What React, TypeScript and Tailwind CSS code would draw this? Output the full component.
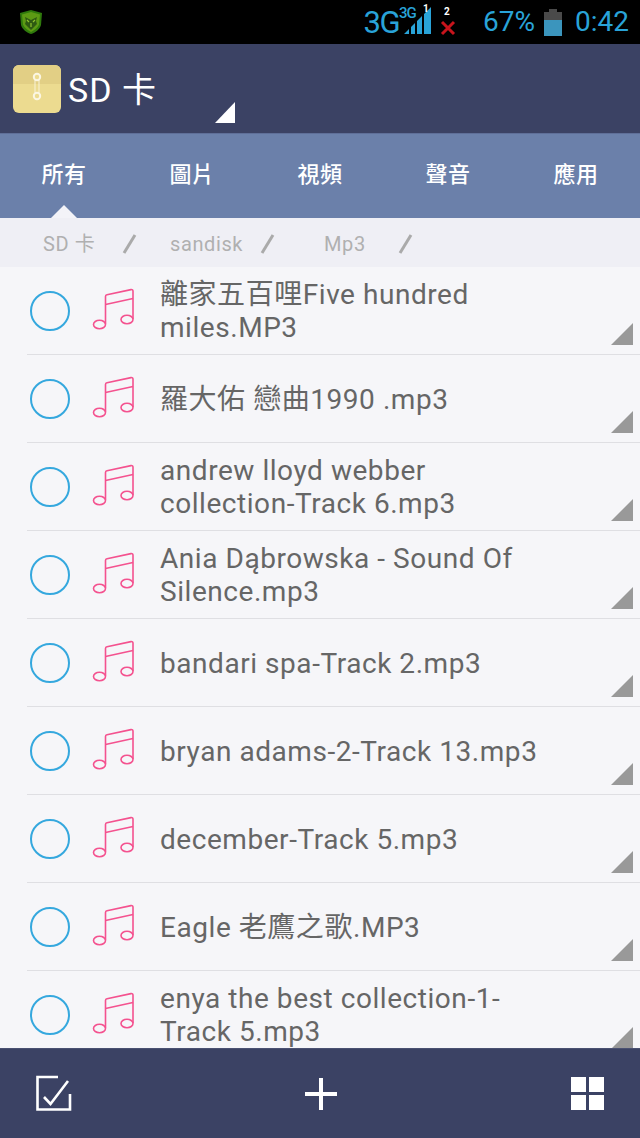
const files = [
  ["離家五百哩Five hundred", "miles.MP3"],
  ["羅大佑 戀曲1990 .mp3"],
  ["andrew lloyd webber", "collection-Track 6.mp3"],
  ["Ania Dąbrowska - Sound Of", "Silence.mp3"],
  ["bandari spa-Track 2.mp3"],
  ["bryan adams-2-Track 13.mp3"],
  ["december-Track 5.mp3"],
  ["Eagle 老鷹之歌.MP3"],
  ["enya the best collection-1-", "Track 5.mp3"],
];

const tabs = ["所有", "圖片", "視頻", "聲音", "應用"];

const fontStack = "font-['Roboto','Noto_Sans_CJK_TC',sans-serif]";

function ZipIcon() {
  return (
    <svg width="48" height="48" viewBox="0 0 48 48" className="shrink-0">
      <rect width="48" height="48" rx="6" fill="#ecdb90" />
      <path d="M0 19V6a6 6 0 0 1 6-6h36a6 6 0 0 1 6 6v13z" fill="#e2cf85" />
      <path d="M22 15v15M26 15v15" stroke="#f8f2d8" strokeWidth="1" />
      <circle cx="24" cy="12" r="3.2" fill="#ecdb90" stroke="#fbf6e2" strokeWidth="2" />
      <circle cx="24" cy="31" r="3.2" fill="#ecdb90" stroke="#fbf6e2" strokeWidth="2" />
    </svg>
  );
}

function Shield() {
  return (
    <svg width="26" height="26" viewBox="0 0 26 26">
      <path d="M13 1l11 3-1 12c-1 4-6 8-10 9-4-1-9-5-10-9L2 4z" fill="#2f7a0c" />
      <path d="M13 3l9 2.500-1 10c-1 3-5 6-8 7.500-3-1.500-7-4.500-8-7.500L4 5.500z" fill="#5c9a14" />
      <path d="M7 8l6 3 6-3-1 4 1 3-6 6-6-6 1-3z" fill="#2e5a12" />
      <path d="M9 11l2 2M17 11l-2 2M13 14v4" stroke="#8fc22e" strokeWidth="1.200" />
    </svg>
  );
}

function Signal() {
  return (
    <svg width="28" height="27" viewBox="0 0 28 27">
      <path d="M0 27l5-5v5zM7 27v-7l4-4v11zM13 27V14l5-5v18zM20 27V7l7-7v27z" fill="#29a3d8" />
    </svg>
  );
}

function NoteIcon() {
  return (
    <svg width="44" height="46" viewBox="0 0 44 46" fill="none" stroke="#f4528f" strokeWidth="1.6" className="shrink-0">
      <ellipse cx="7.500" cy="37.500" rx="6" ry="4.200" />
      <ellipse cx="35" cy="32.500" rx="6" ry="4.200" />
      <path d="M13.500 37V9.500c0-1 .5-1.600 1.500-1.800L39 2.600c1.200-.2 2 .4 2 1.600V32" />
      <path d="M13.500 17.500L41 11.500" />
    </svg>
  );
}

function Corner({ color, w, h }: { color: string; w: number; h: number }) {
  return (
    <svg width={w} height={h} viewBox={`0 0 ${w} ${h}`}>
      <path d={`M0 ${h}L${w} 0V${h}z`} fill={color} />
    </svg>
  );
}

function Slash() {
  return (
    <svg width="15" height="20" viewBox="0 0 15 20" className="shrink-0">
      <path d="M13 1L2 19" stroke="#aaaaaa" strokeWidth="3" />
    </svg>
  );
}

function Row({ lines }: { lines: string[] }) {
  return (
    <div className="relative h-[88px] shrink-0 pl-[27px]">
      <div className="flex h-full items-center border-b border-[#dfdfe3] pb-[1px]">
        <div className="mt-[1px] ml-[3px] h-[40px] w-[40px] shrink-0 rounded-full border-2 border-[#35a8de]" />
        <div className="ml-[22px]">
          <NoteIcon />
        </div>
        <div className="mt-[2px] ml-[24px] text-[28px] leading-[33px] tracking-[0.55px] text-[#666666]">
          {lines.map((l) => (
            <div key={l} className="whitespace-nowrap">
              {l}
            </div>
          ))}
        </div>
      </div>
      <div className="absolute right-[7px] bottom-[10px] flex">
        <Corner color="#999999" w={22} h={22} />
      </div>
    </div>
  );
}

export default function App() {
  return (
    <div className={`flex h-[1138px] w-[640px] flex-col overflow-hidden bg-[#f6f6f9] ${fontStack}`}>
      {/* status bar */}
      <div className="flex h-[44px] shrink-0 items-center bg-black pr-[11px] pl-[18px]">
        <Shield />
        <div className="ml-auto flex items-center text-[#29a3d8]">
          <span className="text-[31px] leading-none tracking-[-1.5px]">3G</span>
          <div className="relative ml-[4px] h-[36px] w-[34px]">
            <div className="absolute top-[3px] left-[1px] flex">
              <Signal />
            </div>
            <span className="absolute top-[2px] left-[-4px] text-[15px] leading-none font-medium tracking-[-1px]">3G</span>
            <span className="absolute top-0 left-[20px] text-[10px] leading-none font-bold text-white">1</span>
          </div>
          <div className="relative ml-[3px] h-[36px] w-[16px]">
            <span className="absolute top-[3px] left-[4px] text-[10px] leading-none font-bold text-white">2</span>
            <svg width="16" height="16" viewBox="0 0 16 16" className="absolute top-[16px] left-0">
              <path d="M2 2l12 12M14 2L2 14" stroke="#c8141c" strokeWidth="3" />
            </svg>
          </div>
          <span className="ml-[27px] text-[28px] leading-none">67%</span>
          <div className="ml-[9px] flex h-[27px] w-[18px] flex-col items-center">
            <div className="h-[3px] w-[8px] bg-[#4a4a4a]" />
            <div className="flex h-[24px] w-[18px] flex-col bg-[#4a4a4a]">
              <div className="mt-auto h-[16px] bg-[#3b95bd]" />
            </div>
          </div>
          <span className="ml-[13px] text-[28px] leading-none">0:42</span>
        </div>
      </div>

      {/* header */}
      <div className="relative flex h-[89px] shrink-0 items-center bg-[#3b4264] pl-[13px]">
        <ZipIcon />
        <span className="mt-[3px] ml-[7px] text-[34px] leading-none tracking-[1px] text-white">SD 卡</span>
        <div className="absolute top-[58px] left-[215px] flex">
          <Corner color="#ffffff" w={20} h={21} />
        </div>
      </div>

      {/* tabs */}
      <div className="grid h-[85px] shrink-0 grid-cols-5 border-t border-[#5f6f98] bg-[#6b80aa]">
        {tabs.map((t, i) => (
          <div key={t} className="relative flex items-center justify-center pb-[3px] text-[22px] font-medium tracking-[0.5px] text-white">
            {t}
            {i === 0 && (
              <div className="absolute bottom-0 left-1/2 h-0 w-0 -translate-x-1/2 border-x-[13px] border-b-[13px] border-x-transparent border-b-[#f3f3f8]" />
            )}
          </div>
        ))}
      </div>

      {/* breadcrumb */}
      <div className="flex h-[49px] shrink-0 items-center bg-[#efeff5] pt-[2px] text-[20px] tracking-[0.6px] text-[#b0b0b0]">
        <span className="ml-[43px] w-[79px]">SD 卡</span>
        <Slash />
        <span className="ml-[33px] w-[90px]">sandisk</span>
        <Slash />
        <span className="ml-[49px] w-[74px]">Mp3</span>
        <Slash />
      </div>

      {/* file list */}
      <div className="min-h-0 flex-1 overflow-hidden">
        {files.map((lines) => (
          <Row key={lines[0]} lines={lines} />
        ))}
      </div>

      {/* bottom bar */}
      <div className="flex h-[90px] shrink-0 items-center justify-between border-t border-[#4a5172] bg-[#3b4264] pr-[36px] pl-[36px]">
        <svg width="36" height="36" viewBox="0 0 36 36" fill="none" stroke="#ffffff" className="mb-[2px]">
          <path d="M22 2H1.500v32.500H34V19" strokeWidth="2.600" />
          <path d="M8 22l6.500 7L32 6" strokeWidth="2.600" />
        </svg>
        <svg width="32" height="32" viewBox="0 0 32 32" fill="#ffffff" className="ml-[-1px]">
          <path d="M14 0h4v14h14v4H18v14h-4V18H0v-4h14z" />
        </svg>
        <svg width="33" height="33" viewBox="0 0 33 33" fill="#ffffff">
          <path d="M0 0h15v15H0zM18 0h15v15H18zM0 18h15v15H0zM18 18h15v15H18z" />
        </svg>
      </div>
    </div>
  );
}
